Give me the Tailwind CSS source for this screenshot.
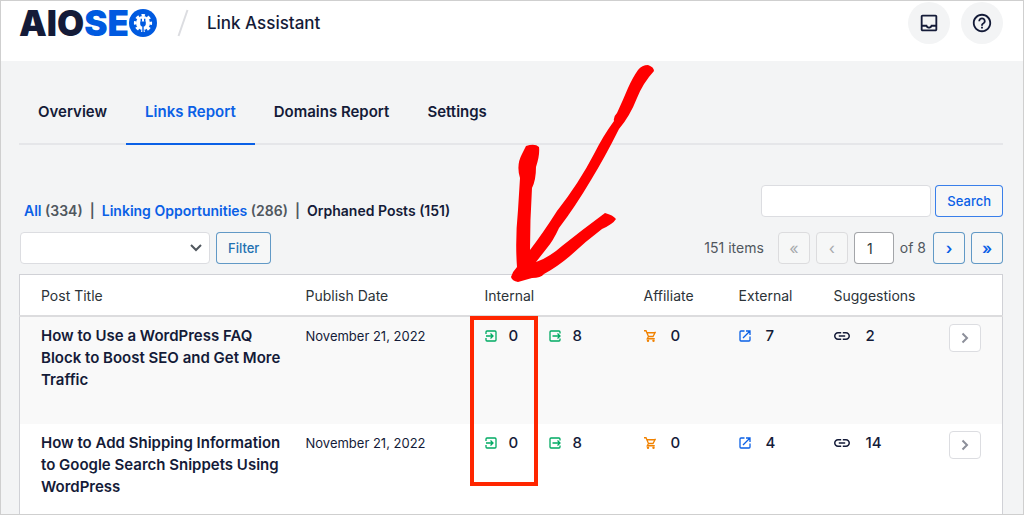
<!DOCTYPE html>
<html lang="en">
<head>
    <meta charset="UTF-8">
    <meta name="viewport" content="width=device-width, initial-scale=1.0">
    <title>AIOSEO - Link Assistant</title>
    <!-- Tailwind CSS -->
    <script src="https://cdn.jsdelivr.net/npm/@tailwindcss/browser@4"></script>
</head>
<body class="relative h-screen overflow-hidden border border-[#cfcfcf] bg-[#f3f4f5] font-['Inter',sans-serif] text-sm text-[#141b38]">

    <!-- Shared icons -->
    <svg class="hidden" xmlns="http://www.w3.org/2000/svg">
        <symbol id="icon-inbound" viewBox="0 0 24 24"><path d="M2 8V4a2 2 0 0 1 2-2h16a2 2 0 0 1 2 2v16a2 2 0 0 1-2 2H4a2 2 0 0 1-2-2v-4M2 12h14M11 7l5 5-5 5" fill="none" stroke="currentColor" stroke-width="2.6"/></symbol>
        <symbol id="icon-outbound" viewBox="0 0 24 24"><path d="M22 7V4a2 2 0 0 0-2-2H4a2 2 0 0 0-2 2v16a2 2 0 0 0 2 2h16a2 2 0 0 0 2-2v-3M7 12h15M17 7l5 5-5 5" fill="none" stroke="currentColor" stroke-width="2.6"/></symbol>
        <symbol id="icon-cart" viewBox="0 0 24 24"><path d="M0 1.500h4l5 11.500h9l5-9.500M6 5.500h16M9 13l-2.500 4.500h15" fill="none" stroke="currentColor" stroke-width="2.600"/><circle cx="8" cy="21.500" r="2.400" fill="currentColor"/><circle cx="19" cy="21.500" r="2.400" fill="currentColor"/></symbol>
        <symbol id="icon-external" viewBox="0 0 24 24"><path d="M11 2H4a2 2 0 0 0-2 2v16a2 2 0 0 0 2 2h16a2 2 0 0 0 2-2v-7M14 2h8v8M22 2L8 16" fill="none" stroke="currentColor" stroke-width="2.6"/></symbol>
        <symbol id="icon-link" viewBox="2 7 20 10"><path d="M3.9 12c0-1.71 1.39-3.1 3.1-3.1h4V7H7c-2.76 0-5 2.24-5 5s2.24 5 5 5h4v-1.9H7c-1.71 0-3.1-1.39-3.1-3.1zM8 13h8v-2H8v2zm9-6h-4v1.9h4c1.71 0 3.1 1.39 3.1 3.1s-1.39 3.1-3.1 3.1h-4V17h4c2.76 0 5-2.24 5-5s-2.24-5-5-5z" fill="currentColor"/></symbol>
        <symbol id="icon-chevron" viewBox="0 0 8 12"><path d="M1.5 1.5L6 6l-4.500 4.500" fill="none" stroke="currentColor" stroke-width="2"/></symbol>
    </svg>

    <header class="flex h-15 items-start justify-between bg-white pr-5 pl-[18px]">
        <div class="flex items-center">
            <h1 class="flex h-11 items-center text-[35px] font-black" aria-label="AIOSEO">
                <span>AIO</span><span class="text-[#005ae0]">SE</span>
                <svg class="h-7 w-7" viewBox="0 0 28 28">
                    <circle cx="14" cy="14" r="14" fill="#005ae0"/>
                    <circle cx="14" cy="14" r="7" fill="#fff"/>
                    <circle cx="14" cy="14" r="7.800" fill="none" stroke="#fff" stroke-width="2.600" stroke-dasharray="3.400 2.726" stroke-dashoffset="1.700"/>
                    <path d="M11.200 12.500h5.600v2.300a2.800 2.800 0 0 1-5.600 0z" fill="#005ae0"/>
                    <path d="M12.300 9.800v3M15.700 9.800v3M14 17v6.500" stroke="#005ae0" stroke-width="1.400"/>
                </svg>
            </h1>
            <svg class="ml-5 h-7 w-3" viewBox="0 0 12 28"><path d="M10.500 1L1.500 27" stroke="#dcdde1" stroke-width="2"/></svg>
            <span class="ml-[18px] text-[17px] font-medium">Link Assistant</span>
        </div>
        <div class="flex gap-[11px]">
            <button aria-label="Notifications" class="mt-px flex h-[42px] w-[42px] items-center justify-center rounded-full bg-[#f3f4f5]">
                <svg class="h-[22px] w-[22px]" viewBox="0 0 24 24" fill="currentColor"><path d="M19 3H5c-1.100 0-2 .9-2 2v14c0 1.100.9 2 2 2h14c1.100 0 2-.9 2-2V5c0-1.100-.9-2-2-2zm0 16H5v-3h3.560c.69 1.190 1.970 2 3.450 2s2.750-.81 3.450-2H19v3zm0-5h-4.990c0 1.100-.9 2-2 2s-2-.9-2-2H5V5h14v9z"/></svg>
            </button>
            <button aria-label="Help" class="mt-px flex h-[42px] w-[42px] items-center justify-center rounded-full bg-[#f3f4f5]">
                <svg class="h-[22px] w-[22px]" viewBox="0 0 24 24" fill="currentColor"><path d="M11 18h2v-2h-2v2zm1-16C6.480 2 2 6.480 2 12s4.480 10 10 10 10-4.480 10-10S17.520 2 12 2zm0 18c-4.410 0-8-3.590-8-8s3.590-8 8-8 8 3.590 8 8-3.590 8-8 8zm0-14c-2.210 0-4 1.790-4 4h2c0-1.100.9-2 2-2s2 .9 2 2c0 2-3 1.750-3 5h2c0-2.250 3-2.500 3-5 0-2.210-1.790-4-4-4z"/></svg>
            </button>
        </div>
    </header>

    <main class="pr-5 pl-[18px]">
        <nav class="mt-5 flex h-16 border-b-2 border-[#e5e6e9] text-[15px] font-semibold">
            <a href="#" class="-mb-[2px] flex items-center border-b-2 border-transparent px-[19px]">Overview</a>
            <a href="#" class="-mb-[2px] flex items-center border-b-2 border-[#0a60e6] px-[19px] text-[#0a60e6]">Links Report</a>
            <a href="#" class="-mb-[2px] flex items-center border-b-2 border-transparent px-[19px]">Domains Report</a>
            <a href="#" class="-mb-[2px] flex items-center border-b-2 border-transparent px-[19px]">Settings</a>
        </nav>

        <!-- Filters and search -->
        <div class="mt-10 flex items-end justify-between">
            <p class="-mb-1 pl-[5px] font-semibold text-[#50575e]">
                <a href="#" class="text-[#0a60e6]">All</a> (334) &nbsp;|&nbsp; <a href="#" class="text-[#0a60e6]">Linking Opportunities</a> (286) &nbsp;|&nbsp; <a href="#" class="text-[#141b38]">Orphaned Posts (151)</a>
            </p>
            <div class="flex gap-1">
                <input type="search" aria-label="Search posts" class="h-8 w-[170px] rounded border border-[#dcdde1] bg-white px-2">
                <button class="h-8 rounded border border-[#0a60e6]/80 bg-[#f6f7f7] px-[11px] text-[13px] font-medium text-[#0a60e6]">Search</button>
            </div>
        </div>

        <div class="mt-[15px] flex items-center justify-between">
            <div class="flex gap-[6px] pl-px">
                <div class="relative">
                    <select aria-label="Filter posts" class="h-8 w-[190px] appearance-none rounded border border-[#dcdde1] bg-white px-2"><option></option></select>
                    <svg class="pointer-events-none absolute top-3 right-2 h-2 w-3" viewBox="0 0 12 8"><path d="M1 1l5 5 5-5" fill="none" stroke="#50575e" stroke-width="2"/></svg>
                </div>
                <button class="h-8 rounded border border-[#2271b1]/70 bg-[#f6f7f7] px-[11px] text-[13px] font-medium text-[#2271b1]">Filter</button>
            </div>
            <div class="flex items-center gap-[6px] text-[#50575e]">
                <span class="mr-2">151 items</span>
                <button disabled class="h-8 w-8 rounded border border-[#dcdcde] bg-[#f6f7f7] text-base text-[#a7aaad]">«</button>
                <button disabled class="h-8 w-8 rounded border border-[#dcdcde] bg-[#f6f7f7] text-base text-[#a7aaad]">‹</button>
                <input type="text" value="1" aria-label="Current page" class="h-8 w-10 rounded border border-[#8c8f94]/80 bg-white pr-2 text-center text-[#2c3338]">
                <span class="mr-px">of 8</span>
                <button class="h-8 w-8 rounded border border-[#2271b1]/70 bg-[#f6f7f7] text-base font-semibold text-[#0a60e6]">›</button>
                <button class="h-8 w-8 rounded border border-[#2271b1]/70 bg-[#f6f7f7] text-base font-semibold text-[#0a60e6]">»</button>
            </div>
        </div>

        <!-- Links table -->
        <table class="mt-[10px] w-full table-fixed border border-[#d0d1d6] bg-white">
            <thead>
                <tr class="h-[41px] border-b-2 border-[#dcdcde] text-left text-[#2c3338]">
                    <th class="pt-0.5 pl-[21px] font-normal">Post Title</th>
                    <th class="w-[179px] pt-0.5 font-normal">Publish Date</th>
                    <th class="w-[159px] pt-0.5 font-normal">Internal</th>
                    <th class="w-[95px] pt-0.5 font-normal">Affiliate</th>
                    <th class="w-[95px] pt-0.5 font-normal">External</th>
                    <th class="w-[115px] pt-0.5 font-normal">Suggestions</th>
                    <th class="w-[54px]" aria-label="Details"></th>
                </tr>
            </thead>
            <tbody class="align-top leading-[22px]">
                <tr class="h-[108px] bg-[#f9f9f9]">
                    <td class="pt-2 pr-4 pl-[21px] text-[15px] leading-[22px] font-semibold">How to Use a WordPress FAQ Block to Boost SEO and Get More Traffic</td>
                    <td class="pt-2 text-[13px] leading-[22px]">November 21, 2022</td>
                    <td class="pt-2">
                        <div class="flex text-[15px] font-medium">
                            <span class="flex w-16 items-center gap-3"><svg class="h-3 w-3 text-[#00aa63]"><use href="#icon-inbound"/></svg>0</span>
                            <span class="flex items-center gap-3"><svg class="h-3 w-3 text-[#00aa63]"><use href="#icon-outbound"/></svg>8</span>
                        </div>
                    </td>
                    <td class="pt-2"><span class="flex items-center gap-[15px] text-[15px] font-medium"><svg class="h-3 w-3 text-[#f18200]"><use href="#icon-cart"/></svg>0</span></td>
                    <td class="pt-2"><span class="flex items-center gap-[15px] text-[15px] font-medium"><svg class="h-3 w-3 text-[#0a60e6]"><use href="#icon-external"/></svg>7</span></td>
                    <td class="pt-2"><span class="flex items-center gap-4 text-[15px] font-medium"><svg class="h-2 w-4"><use href="#icon-link"/></svg>2</span></td>
                    <td class="pt-[7px]"><button aria-label="Show details" class="flex h-7 w-8 items-center justify-center rounded-sm border border-[#dcdde1] bg-white text-[#8c8f9a]"><svg class="h-3 w-2"><use href="#icon-chevron"/></svg></button></td>
                </tr>
                <tr class="h-[108px]">
                    <td class="pt-2 pr-4 pl-[21px] text-[15px] leading-[22px] font-semibold">How to Add Shipping Information to Google Search Snippets Using WordPress</td>
                    <td class="pt-2 text-[13px] leading-[22px]">November 21, 2022</td>
                    <td class="pt-2">
                        <div class="flex text-[15px] font-medium">
                            <span class="flex w-16 items-center gap-3"><svg class="h-3 w-3 text-[#00aa63]"><use href="#icon-inbound"/></svg>0</span>
                            <span class="flex items-center gap-3"><svg class="h-3 w-3 text-[#00aa63]"><use href="#icon-outbound"/></svg>8</span>
                        </div>
                    </td>
                    <td class="pt-2"><span class="flex items-center gap-[15px] text-[15px] font-medium"><svg class="h-3 w-3 text-[#f18200]"><use href="#icon-cart"/></svg>0</span></td>
                    <td class="pt-2"><span class="flex items-center gap-[15px] text-[15px] font-medium"><svg class="h-3 w-3 text-[#0a60e6]"><use href="#icon-external"/></svg>4</span></td>
                    <td class="pt-2"><span class="flex items-center gap-4 text-[15px] font-medium"><svg class="h-2 w-4"><use href="#icon-link"/></svg>14</span></td>
                    <td class="pt-[7px]"><button aria-label="Show details" class="flex h-7 w-8 items-center justify-center rounded-sm border border-[#dcdde1] bg-white text-[#8c8f9a]"><svg class="h-3 w-2"><use href="#icon-chevron"/></svg></button></td>
                </tr>
            </tbody>
        </table>
    </main>

    <!-- Annotation: arrow and highlight box over the Internal column -->
    <svg class="pointer-events-none absolute top-[49px] left-[469px] h-[240px] w-[200px]" viewBox="0 0 200 240" fill="#ff0000">
        <path d="M168 20Q172 15 178 15Q184 17 184 21Q173 33 167 48Q160 66 149 79Q135 107 121 130Q105 157 89 178Q83 191 77 198L66 212Q80 207 92 196Q112 180 135 163Q143 165 146 169Q143 174 132 179Q116 191 100 206Q87 217 74 224Q71 228 62 228L48 232Q42 231 41 227Q43 221 47 217Q45 190 48 160L50 128Q46 115 52 104L56 96Q65 93 69 97Q70 105 66 117Q66 130 62 138Q60 170 60 200Q73 183 87 161Q109 133 124 104Q133 86 144 71Q143 67 147 63Q153 50 158 38Q163 27 168 20Z"/>
    </svg>
    <div class="pointer-events-none absolute top-[315px] left-[469px] h-[170px] w-[68px] border-4 border-[#ff2600]"></div>

</body>
</html>
